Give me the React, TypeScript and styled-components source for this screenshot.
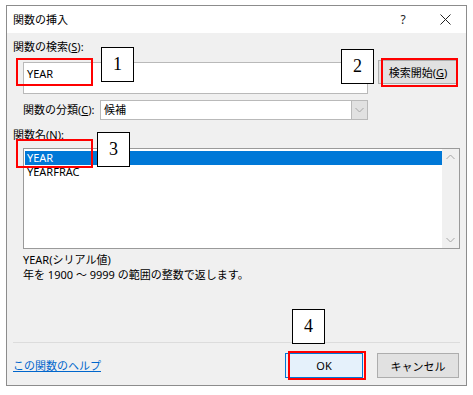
import React from "react";
import styled, { createGlobalStyle } from "styled-components";

const GlobalStyle = createGlobalStyle`
  html, body {
    margin: 0;
    padding: 0;
    background: #ffffff;
  }
  body {
    font-family: "Noto Sans", "Noto Sans CJK JP", sans-serif;
    font-size: 11px;
    color: #000;
  }
`;

const Page = styled.div`
  position: relative;
  width: 473px;
  height: 395px;
  overflow: hidden;
`;

const Dialog = styled.div`
  margin: 5px 0 0 6px;
  width: 461px;
  height: 381px;
  box-sizing: border-box;
  border: 1px solid #8c8c8c;
  display: flex;
  flex-direction: column;
`;

const TitleBar = styled.div`
  height: 27px;
  background: #ffffff;
  display: flex;
  align-items: center;
  padding-left: 6px;
  flex-shrink: 0;
`;

const Title = styled.div`
  flex: 1;
  font-size: 11px;
  line-height: 14px;
`;

const TitleButton = styled.div`
  width: 42px;
  height: 27px;
  display: flex;
  align-items: center;
  justify-content: center;
  font-size: 12px;
  color: #222;
`;

const Body = styled.div`
  flex: 1;
  background: #f0f0f0;
  display: flex;
  flex-direction: column;
`;

const Label = styled.div<{ $indent?: number; $top?: number }>`
  margin-left: ${(p) => p.$indent ?? 6}px;
  margin-top: ${(p) => p.$top ?? 0}px;
  line-height: 14px;
  height: 14px;
  white-space: nowrap;
`;

const SearchRow = styled.div`
  display: flex;
  align-items: flex-start;
  margin-top: 6px;
  padding-left: 16px;
`;

const SearchInput = styled.div`
  width: 345px;
  height: 32px;
  margin-top: 2px;
  box-sizing: border-box;
  border: 1px solid #b9b9b9;
  background: #fff;
  padding: 4px 3px;
  line-height: 14px;
`;

const GrayButton = styled.div<{ $w: number; $primary?: boolean }>`
  width: ${(p) => p.$w}px;
  height: 25px;
  box-sizing: border-box;
  border: 1px solid ${(p) => (p.$primary ? "#0078d7" : "#adadad")};
  background: ${(p) => (p.$primary ? "#e5f1fb" : "#e1e1e1")};
  display: flex;
  align-items: center;
  justify-content: center;
  white-space: nowrap;
`;

const SearchButton = styled(GrayButton)`
  margin-left: 10px;
  height: 24px;
`;

const CategoryRow = styled.div`
  display: flex;
  align-items: center;
  margin-top: 6px;
  padding-left: 16px;
`;

const CategoryLabel = styled.div`
  width: 77px;
  line-height: 14px;
  white-space: nowrap;
`;

const Select = styled.div`
  width: 268px;
  height: 20px;
  box-sizing: border-box;
  border: 1px solid #b9b9b9;
  background: #fff;
  display: flex;
  align-items: center;
`;

const SelectText = styled.div`
  flex: 1;
  padding-left: 3px;
  line-height: 14px;
`;

const SelectArrow = styled.div`
  width: 16px;
  height: 18px;
  box-sizing: border-box;
  border-left: 1px solid #b9b9b9;
  background: #e1e1e1;
  display: flex;
  align-items: center;
  justify-content: center;
`;

const ListBox = styled.div`
  margin: 6px 0 0 16px;
  width: 437px;
  height: 101px;
  box-sizing: border-box;
  border: 1px solid #9a9a9a;
  background: #fff;
  display: flex;
`;

const ListItems = styled.div`
  flex: 1;
  padding: 2px 0 0 1px;
`;

const ListItem = styled.div<{ $selected?: boolean }>`
  height: 14px;
  line-height: 14px;
  padding-left: 2px;
  background: ${(p) => (p.$selected ? "#0078d7" : "transparent")};
  color: ${(p) => (p.$selected ? "#fff" : "#000")};
`;

const ScrollBar = styled.div`
  width: 17px;
  background: #f0f0f0;
  display: flex;
  flex-direction: column;
  justify-content: space-between;
  align-items: center;
  padding: 5px 0;
`;

const Description = styled.div`
  margin: 3px 0 0 16px;
  line-height: 15px;
`;

const Separator = styled.div`
  margin: auto 6px 0 6px;
  height: 1px;
  background: #dcdcdc;
`;

const Footer = styled.div`
  display: flex;
  align-items: center;
  margin: 10px 7px 7px 6px;
  height: 25px;
`;

const HelpLink = styled.a`
  flex: 1;
  color: #0066cc;
  text-decoration: underline;
  line-height: 14px;
`;

const ButtonGap = styled.div`
  width: 14px;
`;

/* annotation overlays */
const RedBox = styled.div<{ $x: number; $y: number; $w: number; $h: number }>`
  position: absolute;
  left: ${(p) => p.$x}px;
  top: ${(p) => p.$y}px;
  width: ${(p) => p.$w}px;
  height: ${(p) => p.$h}px;
  box-sizing: border-box;
  border: 2px solid #ff0000;
`;

const NumberBox = styled.div<{ $x: number; $y: number }>`
  position: absolute;
  left: ${(p) => p.$x}px;
  top: ${(p) => p.$y}px;
  width: 33px;
  height: 35px;
  box-sizing: border-box;
  border: 1px solid #000;
  background: #fff;
  display: flex;
  align-items: center;
  justify-content: center;
  font-family: "Liberation Serif", serif;
  font-size: 18px;
`;

const Chevron = ({ up }: { up?: boolean }) => (
  <svg width="9" height="6" viewBox="0 0 9 6">
    <path
      d={up ? "M0.5 5 L4.5 1 L8.5 5" : "M0.5 1 L4.5 5 L8.5 1"}
      fill="none"
      stroke="#a6a6a6"
      strokeWidth="1"
    />
  </svg>
);

const App = () => {
  return (
    <Page>
      <GlobalStyle />
      <Dialog>
        <TitleBar>
          <Title>関数の挿入</Title>
          <TitleButton>?</TitleButton>
          <TitleButton>
            <svg width="11" height="11" viewBox="0 0 11 11">
              <path d="M0.5 0.5 L10.5 10.5 M10.5 0.5 L0.5 10.5" stroke="#222" strokeWidth="1" />
            </svg>
          </TitleButton>
        </TitleBar>
        <Body>
          <Label $top={7}>
            関数の検索(<u>S</u>):
          </Label>
          <SearchRow>
            <SearchInput>YEAR</SearchInput>
            <SearchButton $w={80}>
              検索開始(<u>G</u>)
            </SearchButton>
          </SearchRow>
          <CategoryRow>
            <CategoryLabel>
              関数の分類(<u>C</u>):
            </CategoryLabel>
            <Select>
              <SelectText>候補</SelectText>
              <SelectArrow>
                <Chevron />
              </SelectArrow>
            </Select>
          </CategoryRow>
          <Label $top={8}>
            関数名(<u>N</u>):
          </Label>
          <ListBox>
            <ListItems>
              <ListItem $selected>YEAR</ListItem>
              <ListItem>YEARFRAC</ListItem>
            </ListItems>
            <ScrollBar>
              <Chevron up />
              <Chevron />
            </ScrollBar>
          </ListBox>
          <Description>
            YEAR(シリアル値)
            <br />
            年を 1900 ～ 9999 の範囲の整数で返します。
          </Description>
          <Separator />
          <Footer>
            <HelpLink href="#">この関数のヘルプ</HelpLink>
            <GrayButton $w={78} $primary>
              OK
            </GrayButton>
            <ButtonGap />
            <GrayButton $w={82}>キャンセル</GrayButton>
          </Footer>
        </Body>
      </Dialog>

      <RedBox $x={16} $y={58} $w={77} $h={28} />
      <NumberBox $x={101} $y={47}>1</NumberBox>
      <RedBox $x={381} $y={58} $w={77} $h={29} />
      <NumberBox $x={341} $y={49}>2</NumberBox>
      <RedBox $x={16} $y={139} $w={77} $h={29} />
      <NumberBox $x={97} $y={132}>3</NumberBox>
      <RedBox $x={288} $y={351} $w={78} $h={29} />
      <NumberBox $x={292} $y={309}>4</NumberBox>
    </Page>
  );
};

export default App;
